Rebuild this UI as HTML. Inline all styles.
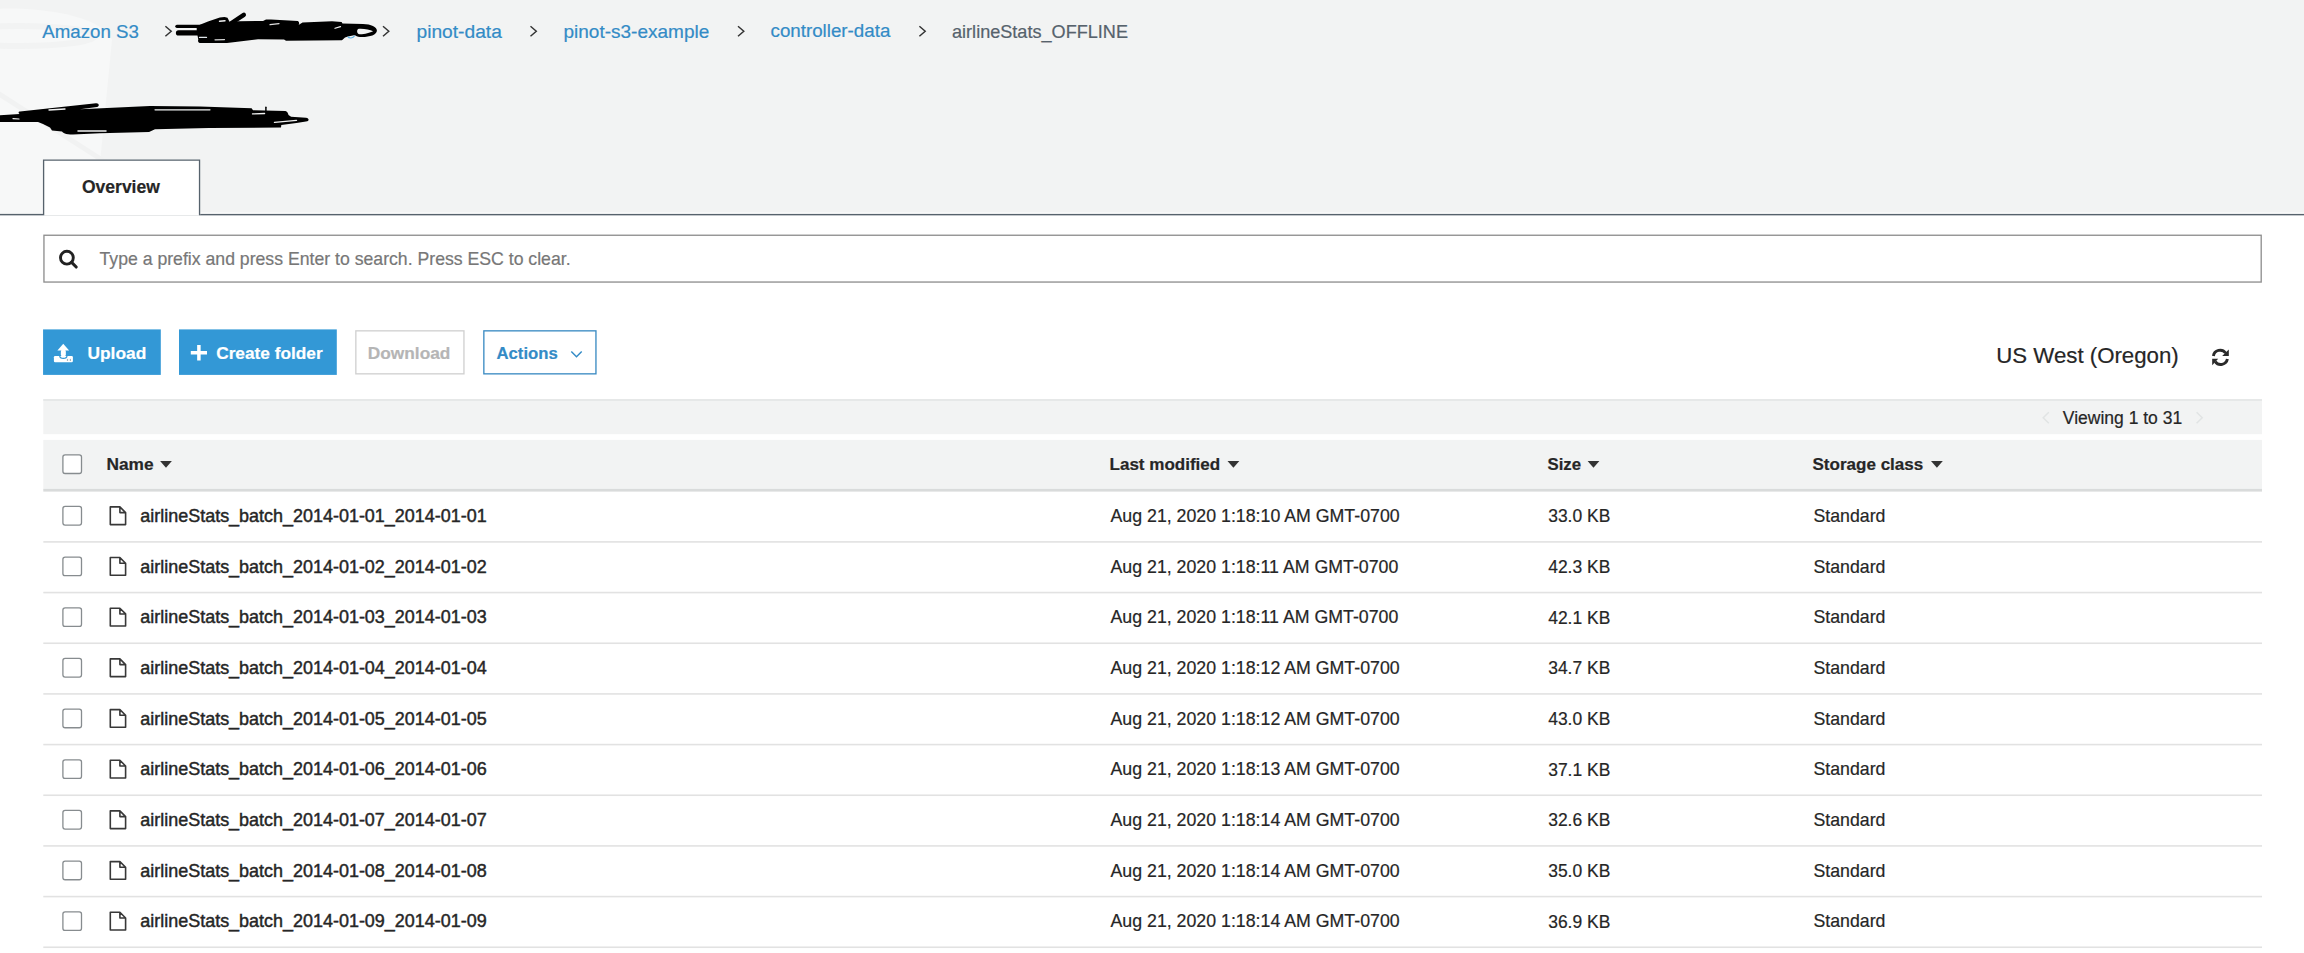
<!DOCTYPE html>
<html><head><meta charset="utf-8"><style>
html,body{margin:0;padding:0;}
body{width:2304px;height:953px;overflow:hidden;background:#fff;position:relative;font-family:"Liberation Sans",sans-serif;}
.t{position:absolute;white-space:nowrap;-webkit-text-stroke:0.2px currentColor;}
svg{display:block}
</style></head><body>
<svg style="position:absolute;left:0;top:0" width="2304" height="953" viewBox="0 0 2304 953"><rect x="0" y="0" width="2304" height="212.6" fill="#f2f3f3"/><path d="M-80 30 C-60 0 95 0 112 40 L95 214 L-80 214 Z" fill="#f7f8f8"/><ellipse cx="20" cy="36" rx="75" ry="10" fill="none" stroke="#f2f3f3" stroke-width="6"/><path d="M-10 88 L110 165" stroke="#f1f2f2" stroke-width="5"/><rect x="0" y="213.9" width="2304" height="1.45" fill="#56626c"/><rect x="43" y="159.6" width="157.2" height="56" fill="#fff"/><path d="M43.6 215.35 V160.2 H199.55 V215.35" fill="none" stroke="#56626c" stroke-width="1.33"/><rect x="43.95" y="235.25" width="2217.25" height="46.8" fill="#fff" stroke="#8e8e8e" stroke-width="1.33"/><rect x="43.07" y="329.4" width="117.73" height="45.5" fill="#3398d6"/><rect x="179" y="329.4" width="157.8" height="45.5" fill="#3398d6"/><rect x="355.85" y="330.85" width="108.1" height="43" fill="#fff" stroke="#d0d0d0" stroke-width="1.33"/><rect x="483.85" y="330.85" width="112.1" height="43" fill="#fff" stroke="#3a8ac2" stroke-width="1.33"/><rect x="43.3" y="399" width="2218.7" height="35.2" fill="#f2f3f3"/><rect x="43.3" y="399" width="2218.7" height="2" fill="#e6e8e8"/><rect x="43.3" y="439.9" width="2218.7" height="49.5" fill="#f2f3f3"/><rect x="43.3" y="488.9" width="2218.7" height="2.7" fill="#d9dbdb"/><rect x="62.9" y="454.90" width="18.6" height="18.6" rx="2.2" fill="#fff" stroke="#878c8f" stroke-width="1.3"/><rect x="62.9" y="506.45" width="18.6" height="18.6" rx="2.2" fill="#fff" stroke="#878c8f" stroke-width="1.3"/><rect x="43.3" y="541.10" width="2218.7" height="1.6" fill="#e2e2e2"/><path d="M110.3 506.90 H119.9 L125.6 512.60 V524.60 H110.3 Z M119.9 506.90 V512.60 H125.6" fill="none" stroke="#383838" stroke-width="1.6" stroke-linejoin="round"/><rect x="62.9" y="557.12" width="18.6" height="18.6" rx="2.2" fill="#fff" stroke="#878c8f" stroke-width="1.3"/><rect x="43.3" y="591.77" width="2218.7" height="1.6" fill="#e2e2e2"/><path d="M110.3 557.57 H119.9 L125.6 563.27 V575.27 H110.3 Z M119.9 557.57 V563.27 H125.6" fill="none" stroke="#383838" stroke-width="1.6" stroke-linejoin="round"/><rect x="62.9" y="607.79" width="18.6" height="18.6" rx="2.2" fill="#fff" stroke="#878c8f" stroke-width="1.3"/><rect x="43.3" y="642.44" width="2218.7" height="1.6" fill="#e2e2e2"/><path d="M110.3 608.24 H119.9 L125.6 613.94 V625.94 H110.3 Z M119.9 608.24 V613.94 H125.6" fill="none" stroke="#383838" stroke-width="1.6" stroke-linejoin="round"/><rect x="62.9" y="658.46" width="18.6" height="18.6" rx="2.2" fill="#fff" stroke="#878c8f" stroke-width="1.3"/><rect x="43.3" y="693.11" width="2218.7" height="1.6" fill="#e2e2e2"/><path d="M110.3 658.91 H119.9 L125.6 664.61 V676.61 H110.3 Z M119.9 658.91 V664.61 H125.6" fill="none" stroke="#383838" stroke-width="1.6" stroke-linejoin="round"/><rect x="62.9" y="709.13" width="18.6" height="18.6" rx="2.2" fill="#fff" stroke="#878c8f" stroke-width="1.3"/><rect x="43.3" y="743.78" width="2218.7" height="1.6" fill="#e2e2e2"/><path d="M110.3 709.58 H119.9 L125.6 715.28 V727.28 H110.3 Z M119.9 709.58 V715.28 H125.6" fill="none" stroke="#383838" stroke-width="1.6" stroke-linejoin="round"/><rect x="62.9" y="759.80" width="18.6" height="18.6" rx="2.2" fill="#fff" stroke="#878c8f" stroke-width="1.3"/><rect x="43.3" y="794.45" width="2218.7" height="1.6" fill="#e2e2e2"/><path d="M110.3 760.25 H119.9 L125.6 765.95 V777.95 H110.3 Z M119.9 760.25 V765.95 H125.6" fill="none" stroke="#383838" stroke-width="1.6" stroke-linejoin="round"/><rect x="62.9" y="810.47" width="18.6" height="18.6" rx="2.2" fill="#fff" stroke="#878c8f" stroke-width="1.3"/><rect x="43.3" y="845.12" width="2218.7" height="1.6" fill="#e2e2e2"/><path d="M110.3 810.92 H119.9 L125.6 816.62 V828.62 H110.3 Z M119.9 810.92 V816.62 H125.6" fill="none" stroke="#383838" stroke-width="1.6" stroke-linejoin="round"/><rect x="62.9" y="861.14" width="18.6" height="18.6" rx="2.2" fill="#fff" stroke="#878c8f" stroke-width="1.3"/><rect x="43.3" y="895.79" width="2218.7" height="1.6" fill="#e2e2e2"/><path d="M110.3 861.59 H119.9 L125.6 867.29 V879.29 H110.3 Z M119.9 861.59 V867.29 H125.6" fill="none" stroke="#383838" stroke-width="1.6" stroke-linejoin="round"/><rect x="62.9" y="911.81" width="18.6" height="18.6" rx="2.2" fill="#fff" stroke="#878c8f" stroke-width="1.3"/><rect x="43.3" y="946.46" width="2218.7" height="1.6" fill="#e2e2e2"/><path d="M110.3 912.26 H119.9 L125.6 917.96 V929.96 H110.3 Z M119.9 912.26 V917.96 H125.6" fill="none" stroke="#383838" stroke-width="1.6" stroke-linejoin="round"/></svg>
<div class="t" style="left:42.30px;top:22.97px;font-size:18.7px;line-height:18.7px;color:#338bc6;font-weight:normal;">Amazon S3</div>
<div class="t" style="left:416.50px;top:22.05px;font-size:19.2px;line-height:19.2px;color:#338bc6;font-weight:normal;">pinot-data</div>
<div class="t" style="left:563.50px;top:22.22px;font-size:19.0px;line-height:19.0px;color:#338bc6;font-weight:normal;">pinot-s3-example</div>
<div class="t" style="left:770.50px;top:22.43px;font-size:18.75px;line-height:18.75px;color:#338bc6;font-weight:normal;">controller-data</div>
<div class="t" style="left:952.00px;top:22.98px;font-size:18.1px;line-height:18.1px;color:#56626c;font-weight:normal;">airlineStats_OFFLINE</div>
<div class="t" style="left:82.00px;top:178.89px;font-size:17.5px;line-height:17.5px;color:#262626;font-weight:bold;">Overview</div>
<div class="t" style="left:99.50px;top:250.75px;font-size:17.66px;line-height:17.66px;color:#777777;font-weight:normal;">Type a prefix and press Enter to search. Press ESC to clear.</div>
<div class="t" style="left:87.50px;top:345.31px;font-size:17.35px;line-height:17.35px;color:#fff;font-weight:bold;">Upload</div>
<div class="t" style="left:216.20px;top:345.39px;font-size:17.26px;line-height:17.26px;color:#fff;font-weight:bold;">Create folder</div>
<div class="t" style="left:367.80px;top:345.36px;font-size:17.3px;line-height:17.3px;color:#b5b5b5;font-weight:bold;">Download</div>
<div class="t" style="left:496.50px;top:345.86px;font-size:16.7px;line-height:16.7px;color:#338bc6;font-weight:bold;">Actions</div>
<div class="t" style="left:1996.20px;top:345.17px;font-size:22.25px;line-height:22.25px;color:#262626;font-weight:normal;">US West (Oregon)</div>
<div class="t" style="left:2062.80px;top:409.99px;font-size:17.5px;line-height:17.5px;color:#262626;font-weight:normal;">Viewing 1 to 31</div>
<div class="t" style="left:106.50px;top:455.56px;font-size:17.3px;line-height:17.3px;color:#262626;font-weight:bold;">Name</div>
<div class="t" style="left:1109.50px;top:455.77px;font-size:17.05px;line-height:17.05px;color:#262626;font-weight:bold;">Last modified</div>
<div class="t" style="left:1547.50px;top:456.68px;font-size:16.8px;line-height:16.8px;color:#262626;font-weight:bold;">Size</div>
<div class="t" style="left:1812.50px;top:455.77px;font-size:17.05px;line-height:17.05px;color:#262626;font-weight:bold;">Storage class</div>
<div class="t" style="left:140.30px;top:507.89px;font-size:17.97px;line-height:17.97px;color:#262626;font-weight:normal;-webkit-text-stroke:0.45px #262626;">airlineStats_batch_2014-01-01_2014-01-01</div>
<div class="t" style="left:1110.50px;top:508.07px;font-size:17.76px;line-height:17.76px;color:#262626;font-weight:normal;">Aug 21, 2020 1:18:10 AM GMT-0700</div>
<div class="t" style="left:1548.20px;top:508.31px;font-size:17.47px;line-height:17.47px;color:#262626;font-weight:normal;">33.0 KB</div>
<div class="t" style="left:1813.50px;top:508.09px;font-size:17.73px;line-height:17.73px;color:#262626;font-weight:normal;">Standard</div>
<div class="t" style="left:140.30px;top:558.56px;font-size:17.97px;line-height:17.97px;color:#262626;font-weight:normal;-webkit-text-stroke:0.45px #262626;">airlineStats_batch_2014-01-02_2014-01-02</div>
<div class="t" style="left:1110.50px;top:558.74px;font-size:17.76px;line-height:17.76px;color:#262626;font-weight:normal;">Aug 21, 2020 1:18:11 AM GMT-0700</div>
<div class="t" style="left:1548.20px;top:558.98px;font-size:17.47px;line-height:17.47px;color:#262626;font-weight:normal;">42.3 KB</div>
<div class="t" style="left:1813.50px;top:558.76px;font-size:17.73px;line-height:17.73px;color:#262626;font-weight:normal;">Standard</div>
<div class="t" style="left:140.30px;top:609.23px;font-size:17.97px;line-height:17.97px;color:#262626;font-weight:normal;-webkit-text-stroke:0.45px #262626;">airlineStats_batch_2014-01-03_2014-01-03</div>
<div class="t" style="left:1110.50px;top:609.41px;font-size:17.76px;line-height:17.76px;color:#262626;font-weight:normal;">Aug 21, 2020 1:18:11 AM GMT-0700</div>
<div class="t" style="left:1548.20px;top:609.65px;font-size:17.47px;line-height:17.47px;color:#262626;font-weight:normal;">42.1 KB</div>
<div class="t" style="left:1813.50px;top:609.43px;font-size:17.73px;line-height:17.73px;color:#262626;font-weight:normal;">Standard</div>
<div class="t" style="left:140.30px;top:659.90px;font-size:17.97px;line-height:17.97px;color:#262626;font-weight:normal;-webkit-text-stroke:0.45px #262626;">airlineStats_batch_2014-01-04_2014-01-04</div>
<div class="t" style="left:1110.50px;top:660.08px;font-size:17.76px;line-height:17.76px;color:#262626;font-weight:normal;">Aug 21, 2020 1:18:12 AM GMT-0700</div>
<div class="t" style="left:1548.20px;top:660.32px;font-size:17.47px;line-height:17.47px;color:#262626;font-weight:normal;">34.7 KB</div>
<div class="t" style="left:1813.50px;top:660.10px;font-size:17.73px;line-height:17.73px;color:#262626;font-weight:normal;">Standard</div>
<div class="t" style="left:140.30px;top:710.57px;font-size:17.97px;line-height:17.97px;color:#262626;font-weight:normal;-webkit-text-stroke:0.45px #262626;">airlineStats_batch_2014-01-05_2014-01-05</div>
<div class="t" style="left:1110.50px;top:710.75px;font-size:17.76px;line-height:17.76px;color:#262626;font-weight:normal;">Aug 21, 2020 1:18:12 AM GMT-0700</div>
<div class="t" style="left:1548.20px;top:710.99px;font-size:17.47px;line-height:17.47px;color:#262626;font-weight:normal;">43.0 KB</div>
<div class="t" style="left:1813.50px;top:710.77px;font-size:17.73px;line-height:17.73px;color:#262626;font-weight:normal;">Standard</div>
<div class="t" style="left:140.30px;top:761.24px;font-size:17.97px;line-height:17.97px;color:#262626;font-weight:normal;-webkit-text-stroke:0.45px #262626;">airlineStats_batch_2014-01-06_2014-01-06</div>
<div class="t" style="left:1110.50px;top:761.42px;font-size:17.76px;line-height:17.76px;color:#262626;font-weight:normal;">Aug 21, 2020 1:18:13 AM GMT-0700</div>
<div class="t" style="left:1548.20px;top:761.66px;font-size:17.47px;line-height:17.47px;color:#262626;font-weight:normal;">37.1 KB</div>
<div class="t" style="left:1813.50px;top:761.44px;font-size:17.73px;line-height:17.73px;color:#262626;font-weight:normal;">Standard</div>
<div class="t" style="left:140.30px;top:811.91px;font-size:17.97px;line-height:17.97px;color:#262626;font-weight:normal;-webkit-text-stroke:0.45px #262626;">airlineStats_batch_2014-01-07_2014-01-07</div>
<div class="t" style="left:1110.50px;top:812.09px;font-size:17.76px;line-height:17.76px;color:#262626;font-weight:normal;">Aug 21, 2020 1:18:14 AM GMT-0700</div>
<div class="t" style="left:1548.20px;top:812.33px;font-size:17.47px;line-height:17.47px;color:#262626;font-weight:normal;">32.6 KB</div>
<div class="t" style="left:1813.50px;top:812.11px;font-size:17.73px;line-height:17.73px;color:#262626;font-weight:normal;">Standard</div>
<div class="t" style="left:140.30px;top:862.58px;font-size:17.97px;line-height:17.97px;color:#262626;font-weight:normal;-webkit-text-stroke:0.45px #262626;">airlineStats_batch_2014-01-08_2014-01-08</div>
<div class="t" style="left:1110.50px;top:862.76px;font-size:17.76px;line-height:17.76px;color:#262626;font-weight:normal;">Aug 21, 2020 1:18:14 AM GMT-0700</div>
<div class="t" style="left:1548.20px;top:863.00px;font-size:17.47px;line-height:17.47px;color:#262626;font-weight:normal;">35.0 KB</div>
<div class="t" style="left:1813.50px;top:862.78px;font-size:17.73px;line-height:17.73px;color:#262626;font-weight:normal;">Standard</div>
<div class="t" style="left:140.30px;top:913.25px;font-size:17.97px;line-height:17.97px;color:#262626;font-weight:normal;-webkit-text-stroke:0.45px #262626;">airlineStats_batch_2014-01-09_2014-01-09</div>
<div class="t" style="left:1110.50px;top:913.43px;font-size:17.76px;line-height:17.76px;color:#262626;font-weight:normal;">Aug 21, 2020 1:18:14 AM GMT-0700</div>
<div class="t" style="left:1548.20px;top:913.67px;font-size:17.47px;line-height:17.47px;color:#262626;font-weight:normal;">36.9 KB</div>
<div class="t" style="left:1813.50px;top:913.45px;font-size:17.73px;line-height:17.73px;color:#262626;font-weight:normal;">Standard</div>
<svg style="position:absolute;left:0;top:0" width="2304" height="953" viewBox="0 0 2304 953"><path d="M165.39999999999998 26.3 L171.2 31.3 L165.39999999999998 36.3" fill="none" stroke="#333333" stroke-width="1.45"/><path d="M383.0 26.3 L388.8 31.3 L383.0 36.3" fill="none" stroke="#333333" stroke-width="1.45"/><path d="M530.5 26.3 L536.3 31.3 L530.5 36.3" fill="none" stroke="#333333" stroke-width="1.45"/><path d="M738.0 26.3 L743.8 31.3 L738.0 36.3" fill="none" stroke="#333333" stroke-width="1.45"/><path d="M919.4000000000001 26.3 L925.2 31.3 L919.4000000000001 36.3" fill="none" stroke="#333333" stroke-width="1.45"/><circle cx="66.9" cy="257.7" r="6.4" fill="none" stroke="#222" stroke-width="2.9"/><path d="M71.6 262.4 L76.2 267" stroke="#222" stroke-width="3.1" stroke-linecap="round"/><rect x="53.9" y="356.1" width="19" height="6.1" rx="1.2" fill="#fff"/><path d="M59.75 355.9 A3.6 2.4 0 0 0 66.95 355.9" fill="none" stroke="#3398d6" stroke-width="1.2"/><path d="M63.25 343.7 L69.1 350.6 L57.4 350.6 Z" fill="#fff"/><rect x="60.85" y="349.5" width="5" height="7.3" rx="2.2" fill="#fff"/><rect x="66.9" y="358.9" width="1.2" height="2.1" fill="#a9b6c0"/><rect x="69.8" y="358.9" width="1.2" height="2.1" fill="#a9b6c0"/><path d="M198.9 344.9 V360.6 M190.8 352.75 H207" stroke="#fff" stroke-width="3.5"/><path d="M571.3 351.6 L576.5 356.8 L581.7 351.6" fill="none" stroke="#338bc6" stroke-width="1.45"/><path d="M2213.4 356 A6.8 6.8 0 0 1 2225.6 353.0" fill="none" stroke="#2a2a2a" stroke-width="2.9"/><path d="M2228.8 349.6 L2228.8 356 L2222.2 356 Z" fill="#2a2a2a"/><path d="M2227.4 359 A6.8 6.8 0 0 1 2215.2 361.6" fill="none" stroke="#2a2a2a" stroke-width="2.9"/><path d="M2212.2 365.2 L2212.2 358.8 L2218.2 358.8 Z" fill="#2a2a2a"/><path d="M2048.8 412.2 L2043.2 417.7 L2048.8 423.2" fill="none" stroke="#e1e4e4" stroke-width="1.5"/><path d="M2196.6 412.2 L2202.2 417.7 L2196.6 423.2" fill="none" stroke="#e1e4e4" stroke-width="1.5"/><path d="M160.1 461.1 H171.9 L166.0 467.70000000000005 Z" fill="#333"/><path d="M1227.5 461.1 H1239.3 L1233.4 467.70000000000005 Z" fill="#333"/><path d="M1587.6 461.1 H1599.3999999999999 L1593.5 467.70000000000005 Z" fill="#333"/><path d="M1931 461.1 H1942.8 L1936.9 467.70000000000005 Z" fill="#333"/></svg>
<svg style="position:absolute;left:0;top:0" width="400" height="150" viewBox="0 0 400 150">
<g stroke="#000" stroke-linecap="round" fill="none">
<path d="M176.9 26.3 L202 26.3" stroke-width="3.2"/>
<path d="M178.5 32.9 L202 32.9" stroke-width="5.2"/>
<path d="M231.5 23 L243.8 14.8" stroke-width="4.4"/>
</g>
<path fill="#000" d="M199.9 24.75 L208 21.5 L219.8 17.6 L224.5 17 L227.5 17.8 L229.5 21.8 L239 21.3 L263 20.9 L266 19.4 L271 19.4 L297.8 21 C299.5 22 299.5 24 298.5 25 L302.5 22.5 L332 21.3 L341.6 22 L342.5 23.5 L363 24 C371 24.2 376.9 27 376.9 30.6 C376.9 35 370 37.1 362 37.1 C359 37.1 357 36.5 355.5 35.5 L354 35.2 L348 36.4 L345 37.5 L342 40.2 L286 40.8 L284 39.4 L258 39.2 L227 43.1 L201 43.1 C198.5 43.1 197.5 41.5 198.3 39.5 L197.5 35.5 L196.7 29.9 L196.7 27.9 Z"/>
<path fill="#f2f3f3" d="M359 28.7 C364 28.4 370 29.6 373.1 31.2 C370 32.6 364 34.4 359.5 34.2 C356.5 34 356.3 29 359 28.7 Z"/>
<path d="M199.5 37.4 L206.5 37.4" stroke="#dfe6ea" stroke-width="1.3" stroke-linecap="round"/>
<path d="M347.8 36.6 C349 38.6 353 38.6 354.6 35.8" fill="none" stroke="#5aaee0" stroke-width="1.1"/>
<path d="M335 28.3 L340.5 26.6" stroke="#f2f3f3" stroke-width="1.2" stroke-linecap="round"/>
<path d="M219.5 21.2 L225 20.8" stroke="#f2f3f3" stroke-width="1.4" stroke-linecap="round"/>
<path d="M270 24.6 L279 23.6" stroke="#e0e0e0" stroke-width="1.2" stroke-linecap="round"/>
<path d="M215 39.8 L224.5 39.6" stroke="#d8d8d8" stroke-width="1.2" stroke-linecap="round"/>
<path fill="#000" d="M0 115.3 L19.5 113.9 C18 112.5 18.5 111.5 20 111.4 L96 103.2 C99.5 103 99.5 106.5 97 107 L80 109.2 L150 106 L200 106.5 L251.6 108.3 L253 110.2 L285.4 111 C287 111.5 288 112.5 288.5 115 L291.1 116.7 L306 117.7 C309.5 118.5 309.5 121 306 121.6 L296.4 122.9 L281.3 125 L281 127.6 L209 127.9 L155 129.3 L149 131.9 L100 133.2 L73 134.6 C65 134.4 63 133 62 131.5 L52 130.6 L50 127.6 L43 124 L38 122 L0 122 Z"/>
<g stroke="#f2f3f3" stroke-linecap="round" fill="none">
<path d="M78 130.9 L106 130.9" stroke-width="1.5"/>
<path d="M49 110 L65 109" stroke-width="1.3"/>
<path d="M155 109.8 L210 109.8" stroke-width="1.2"/>
<path d="M274.5 122.4 L296.5 120.4" stroke-width="1.4"/>
<path d="M13 118.6 L19 119" stroke-width="1.2"/>
<path d="M252.5 113.9 L264.6 113.5" stroke-width="1.3"/>
</g>
<path d="M265.9 107.3 V110.8" stroke="#000" stroke-width="1.5" stroke-linecap="round"/>
</svg>

</body></html>
